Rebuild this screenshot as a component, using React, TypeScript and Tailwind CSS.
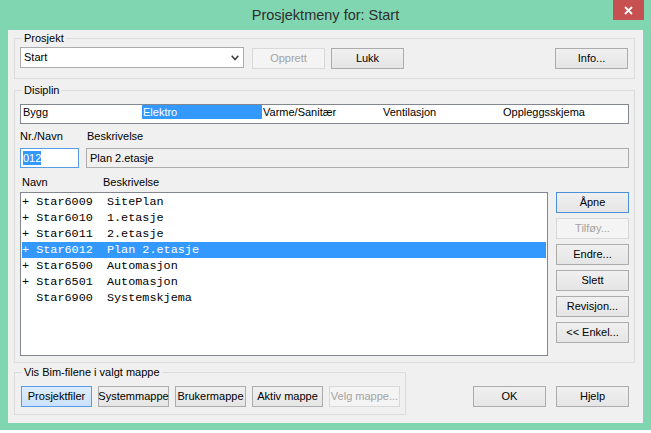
import type { ReactNode } from 'react';

const rows = [
  { plus: true, id: 'Star6009', desc: 'SitePlan' },
  { plus: true, id: 'Star6010', desc: '1.etasje' },
  { plus: true, id: 'Star6011', desc: '2.etasje' },
  { plus: true, id: 'Star6012', desc: 'Plan 2.etasje', selected: true },
  { plus: true, id: 'Star6500', desc: 'Automasjon' },
  { plus: true, id: 'Star6501', desc: 'Automasjon' },
  { plus: false, id: 'Star6900', desc: 'Systemskjema' },
];

const disipliner = ['Bygg', 'Elektro', 'Varme/Sanitær', 'Ventilasjon', 'Oppleggsskjema'];

type BtnProps = {
  children: ReactNode;
  className?: string;
  disabled?: boolean;
  primary?: boolean;
  pressed?: boolean;
};

function Btn({ children, className = '', disabled, primary, pressed }: BtnProps) {
  let look = 'border-[#acacac] bg-linear-to-b from-[#f0f0f0] to-[#e5e5e5] text-black';
  if (disabled) look = 'border-[#d9d9d9] bg-[#f4f4f4] text-[#a3a3a3]';
  else if (pressed) look = 'border-[#569de5] bg-linear-to-b from-[#dcecfc] to-[#c9e2fb] text-black';
  else if (primary) look = 'border-[#4a90d9] bg-linear-to-b from-[#f0f0f0] to-[#e5e5e5] text-black';
  return (
    <div className={`flex h-[21px] shrink-0 items-center justify-center border text-[11px] leading-none ${look} ${className}`}>
      {children}
    </div>
  );
}

function Group({ label, className = '', children }: { label: string; className?: string; children: ReactNode }) {
  return (
    <div className={`relative shrink-0 border border-[#dcdcdc] ${className}`}>
      {/* group caption sits on the top border */}
      <span className="absolute -top-[7px] left-[7px] bg-[#f0f0f0] px-[2px] text-[11px] leading-[13px] text-black">
        {label}
      </span>
      {children}
    </div>
  );
}

export default function App() {
  return (
    <div className="flex h-[433px] w-[651px] flex-col overflow-hidden bg-white font-['Liberation_Sans',Arial,sans-serif] text-[11px] text-black">
      <div className="flex h-[430px] flex-col bg-[#80d6b1]">
        {/* Title bar */}
        <div className="relative flex h-[30px] shrink-0 items-center justify-center">
          <span className="text-[14.5px] leading-none text-[#2e2e2e]">Prosjektmeny for: Start</span>
          <div className="absolute right-[7px] top-0 flex h-[20px] w-[31px] items-center justify-center bg-[#c75050]">
            <svg width="9" height="9" viewBox="0 0 9 9">
              <path d="M1 1 L8 8 M8 1 L1 8" stroke="white" strokeWidth="1.8" />
            </svg>
          </div>
        </div>

        {/* Client area */}
        <div className="mx-[8px] flex h-[393px] flex-col bg-[#f0f0f0] pl-[6px] pr-[8px] pt-[8px]">
          {/* Prosjekt */}
          <Group label="Prosjekt" className="flex h-[41px] items-start pl-[5px] pr-[6px] pt-[8px]">
            <div className="flex h-[21px] w-[224px] items-center border border-[#acacac] bg-white pl-[3px] pr-[4px]">
              <span>Start</span>
              <svg className="ml-auto" width="8" height="6" viewBox="0 0 8 6">
                <polyline points="0.7,0.8 4,4.6 7.3,0.8" fill="none" stroke="#3c3c3c" strokeWidth="1.5" />
              </svg>
            </div>
            <Btn disabled className="ml-[8px] mt-[1px] w-[73px]">Opprett</Btn>
            <Btn className="ml-[6px] mt-[1px] w-[73px]">Lukk</Btn>
            <Btn className="ml-auto mt-[1px] w-[73px]">Info...</Btn>
          </Group>

          {/* Disiplin */}
          <Group label="Disiplin" className="mt-[11px] flex h-[273px] flex-col px-[5px] pt-[13px]">
            <div className="flex h-[20px] shrink-0 border border-[#828790] bg-white pl-[1px]">
              {disipliner.map((d) => (
                <div
                  key={d}
                  className={`h-[14px] w-[120px] shrink-0 pl-[1px] leading-[15px] ${
                    d === 'Elektro' ? 'bg-[#3399ff] text-white' : ''
                  }`}
                >
                  {d}
                </div>
              ))}
            </div>

            <div className="mt-[6px] flex leading-[13px]">
              <span className="w-[67px]">Nr./Navn</span>
              <span>Beskrivelse</span>
            </div>

            <div className="mt-[5px] flex h-[20px] gap-[7px]">
              <div className="flex w-[59px] items-center border border-[#569de5] bg-white pl-[2px]">
                <span className="bg-[#3399ff] leading-[14px] text-white">012</span>
              </div>
              <div className="flex flex-1 items-center border border-[#adadad] bg-[#f0f0f0] pl-[3px]">
                Plan 2.etasje
              </div>
            </div>

            <div className="mt-[8px] flex pl-[2px] leading-[13px]">
              <span className="w-[81px]">Navn</span>
              <span>Beskrivelse</span>
            </div>

            <div className="mt-[3px] flex h-[164px] gap-[8px]">
              <div className="flex flex-1 flex-col border border-[#828790] bg-white p-[1px] font-['Liberation_Mono','Courier_New',monospace] text-[11.8px]">
                {rows.map((r) => (
                  <div
                    key={r.id}
                    className={`h-[16px] whitespace-pre leading-[16px] ${r.selected ? 'bg-[#3399ff] text-white' : ''}`}
                  >
                    {`${r.plus ? '+' : ' '} ${r.id}  ${r.desc}`}
                  </div>
                ))}
              </div>
              <div className="flex w-[73px] flex-col gap-[5px]">
                <Btn primary>Åpne</Btn>
                <Btn disabled>Tilføy...</Btn>
                <Btn>Endre...</Btn>
                <Btn>Slett</Btn>
                <Btn>Revisjon...</Btn>
                <Btn>{'<< Enkel...'}</Btn>
              </div>
            </div>
          </Group>

          {/* Bottom row */}
          <div className="mt-[9px] flex items-start">
            <Group label="Vis Bim-filene i valgt mappe" className="flex h-[43px] w-[392px] gap-[6px] pl-[6px] pt-[13px]">
              <Btn pressed className="w-[71px]">Prosjektfiler</Btn>
              <Btn className="w-[71px]">Systemmappe</Btn>
              <Btn className="w-[71px]">Brukermappe</Btn>
              <Btn className="w-[71px]">Aktiv mappe</Btn>
              <Btn disabled className="w-[71px]">Velg mappe...</Btn>
            </Group>
            <div className="ml-auto mr-[6px] mt-[14px] flex gap-[10px]">
              <Btn className="w-[73px]">OK</Btn>
              <Btn className="w-[73px]">Hjelp</Btn>
            </div>
          </div>
        </div>
      </div>
    </div>
  );
}
